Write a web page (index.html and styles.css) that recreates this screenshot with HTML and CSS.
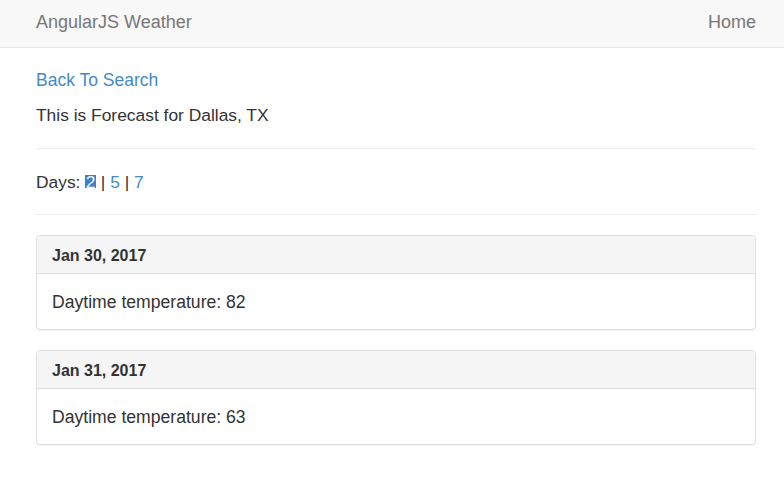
FILE: index.html
```html
<!DOCTYPE html>
<html>
<head>
<meta charset="utf-8">
<link rel="stylesheet" href="styles.css">
</head>
<body>
<nav class="navbar">
  <a class="brand" href="#">AngularJS Weather</a>
  <a class="nav-link" href="#">Home</a>
</nav>
<main class="container">
  <a class="back" href="#">Back To Search</a>
  <p class="intro">This is Forecast for Dallas, TX</p>
  <hr class="rule">
  <div class="days">Days: <a class="day active" href="#">2</a> | <a class="day" href="#">5</a> | <a class="day" href="#">7</a></div>
  <hr class="rule">
  <section class="panel">
    <div class="panel-heading">Jan 30, 2017</div>
    <div class="panel-body">Daytime temperature: 82</div>
  </section>
  <section class="panel">
    <div class="panel-heading">Jan 31, 2017</div>
    <div class="panel-body">Daytime temperature: 63</div>
  </section>
</main>
</body>
</html>
```
FILE: styles.css
```css
* { box-sizing: border-box; }
html, body { margin: 0; padding: 0; background: #fff; }
body {
  font-family: "Liberation Sans", Arial, sans-serif;
  font-size: 17px;
  line-height: 23px;
  color: #333;
}
a { text-decoration: none; color: #428bca; }
.navbar {
  height: 48px;
  background: #f8f8f8;
  border-bottom: 1px solid #e7e7e7;
  display: flex;
  align-items: center;
  justify-content: space-between;
  padding: 0 28px 2px 36px;
}
.brand { color: #777; font-size: 18px; }
.nav-link { color: #777; font-size: 18px; }
.container { padding: 20px 28px 20px 36px; }
.back { display: block; font-size: 17.5px; padding-top: 1px; margin-bottom: -1px; }
.intro { margin: 13px 0 0; font-size: 17.4px; }
.rule { border: 0; border-top: 1px solid #eee; margin: 21px 0 0; height: 0; }
.days { margin-top: 21px; font-size: 17.4px; padding-top: 1px; margin-bottom: -1px; }
.day.active {
  background: #3d80c6;
  color: #f2f6fc;
  display: inline-block;
  height: 13px;
  line-height: 14px;
  padding: 0 0.5px;
}
.panel {
  margin-top: 20px;
  border: 1px solid #ddd;
  border-radius: 4px;
  box-shadow: 0 1px 1px rgba(0,0,0,0.05);
  overflow: hidden;
}
.panel-heading {
  height: 38px;
  background: #f5f5f5;
  border-bottom: 1px solid #ddd;
  padding: 1px 15px 0;
  display: flex;
  align-items: center;
  font-weight: bold;
  font-size: 16px;
}
.panel-body {
  height: 55px;
  padding: 1px 15px 0;
  display: flex;
  align-items: center;
  font-size: 17.6px;
}
```
